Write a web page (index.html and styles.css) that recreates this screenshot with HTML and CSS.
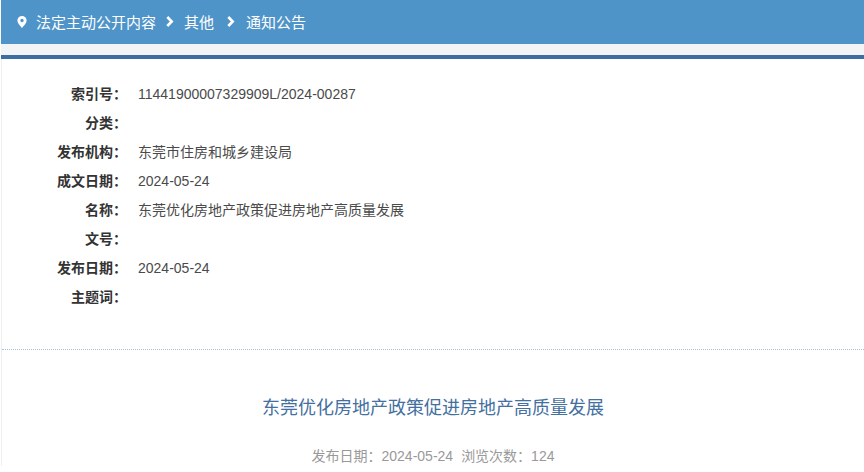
FILE: index.html
```html
<!DOCTYPE html>
<html lang="zh-CN">
<head>
<meta charset="utf-8">
<title>东莞优化房地产政策促进房地产高质量发展</title>
<link rel="stylesheet" href="styles.css">
</head>
<body>
<div class="page">
  <nav class="crumbs">
    <svg class="pin" viewBox="0 0 10 12" width="10" height="12"><path fill-rule="evenodd" fill="#fff" d="M5 0a4.6 4.6 0 0 0-4.6 4.6C.4 7.6 5 12 5 12s4.6-4.4 4.6-7.4A4.6 4.6 0 0 0 5 0zm0 6.2a1.7 1.7 0 1 1 0-3.4A1.7 1.7 0 0 1 5 6.2z"/></svg>
    <span class="crumb">法定主动公开内容</span>
    <svg class="chev" viewBox="0 0 8 11" width="8" height="11"><path d="M1.3 1l4.4 4.5-4.4 4.5" fill="none" stroke="#fff" stroke-width="2.6"/></svg>
    <span class="crumb">其他</span>
    <svg class="chev wide" viewBox="0 0 8 11" width="8" height="11"><path d="M1.3 1l4.4 4.5-4.4 4.5" fill="none" stroke="#fff" stroke-width="2.6"/></svg>
    <span class="crumb">通知公告</span>
  </nav>
  <div class="gap"></div>
  <main class="content">
    <dl class="meta">
      <div class="row"><dt>索引号&#xFF1A;</dt><dd>11441900007329909L/2024-00287</dd></div>
      <div class="row"><dt>分类&#xFF1A;</dt><dd></dd></div>
      <div class="row"><dt>发布机构&#xFF1A;</dt><dd>东莞市住房和城乡建设局</dd></div>
      <div class="row"><dt>成文日期&#xFF1A;</dt><dd>2024-05-24</dd></div>
      <div class="row"><dt>名称&#xFF1A;</dt><dd>东莞优化房地产政策促进房地产高质量发展</dd></div>
      <div class="row"><dt>文号&#xFF1A;</dt><dd></dd></div>
      <div class="row"><dt>发布日期&#xFF1A;</dt><dd>2024-05-24</dd></div>
      <div class="row"><dt>主题词&#xFF1A;</dt><dd></dd></div>
    </dl>
    <h1 class="title">东莞优化房地产政策促进房地产高质量发展</h1>
    <p class="info"><span>发布日期&#xFF1A;2024-05-24</span><span>浏览次数&#xFF1A;124</span></p>
  </main>
</div>
</body>
</html>
```
FILE: styles.css
```css
html, body {
  margin: 0;
  padding: 0;
  background: #fff;
}
body {
  font-family: "Liberation Sans", "Noto Sans CJK SC", sans-serif;
  overflow: hidden;
}
.page {
  width: 864px;
  height: 472px;
  overflow: hidden;
}
.crumbs {
  display: flex;
  align-items: center;
  height: 44px;
  margin-left: 1px;
  padding: 0 0 1px 16px;
  box-sizing: border-box;
  background: #4f94c9;
  color: #fff;
  font-size: 15px;
}
.pin { margin-right: 10px; position: relative; left: 0; flex: none; }
.crumb:first-of-type { margin-left: -1px; }
.chev { margin: 0 10px; }
.chev.wide { margin: 0 11px 0 13px; }
.gap {
  height: 11px;
  margin-left: 1px;
  background: #f2f4f6;
  border-bottom: 4px solid #3a6ea5;
}
.content {
  margin-left: 1px;
  border-left: 1px solid #eef0f2;
}
.meta {
  margin: 0;
  padding: 21px 0 37px;
  border-bottom: 1px dotted #9fc3e0;
  font-size: 14px;
  color: #4a4a4a;
}
.row {
  display: flex;
  height: 29px;
  line-height: 29px;
}
dt {
  width: 125px;
  text-align: right;
  font-weight: bold;
  color: #333;
}
dd {
  margin: 0 0 0 11px;
}
.title {
  margin: 44px 0 0;
  text-align: center;
  font-size: 18px;
  line-height: 28px;
  font-weight: normal;
  color: #44709f;
}
.info {
  display: flex;
  justify-content: center;
  gap: 8px;
  margin: 24px 0 0;
  font-size: 14px;
  line-height: 20px;
  color: #999;
}
```
